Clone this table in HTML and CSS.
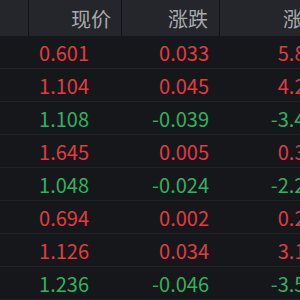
FILE: index.html
```html
<!DOCTYPE html>
<html>
<head>
<meta charset="utf-8">
<link rel="stylesheet" href="styles.css">
</head>
<body>
<div class="table">
  <div class="row head">
    <div class="cell c0"></div>
    <div class="cell c1">现价</div>
    <div class="cell c2">涨跌</div>
    <div class="cell c3">涨跌幅</div>
  </div>
  <div class="row up"><div class="cell c0"></div><div class="cell c1">0.601</div><div class="cell c2">0.033</div><div class="cell c3">5.81%</div></div>
  <div class="row up"><div class="cell c0"></div><div class="cell c1">1.104</div><div class="cell c2">0.045</div><div class="cell c3">4.25%</div></div>
  <div class="row down"><div class="cell c0"></div><div class="cell c1">1.108</div><div class="cell c2">-0.039</div><div class="cell c3">-3.40%</div></div>
  <div class="row up"><div class="cell c0"></div><div class="cell c1">1.645</div><div class="cell c2">0.005</div><div class="cell c3">0.30%</div></div>
  <div class="row down"><div class="cell c0"></div><div class="cell c1">1.048</div><div class="cell c2">-0.024</div><div class="cell c3">-2.24%</div></div>
  <div class="row up"><div class="cell c0"></div><div class="cell c1">0.694</div><div class="cell c2">0.002</div><div class="cell c3">0.29%</div></div>
  <div class="row up"><div class="cell c0"></div><div class="cell c1">1.126</div><div class="cell c2">0.034</div><div class="cell c3">3.11%</div></div>
  <div class="row down"><div class="cell c0"></div><div class="cell c1">1.236</div><div class="cell c2">-0.046</div><div class="cell c3">-3.59%</div></div>
</div>
</body>
</html>
```
FILE: styles.css
```css
html, body {
  margin: 0;
  padding: 0;
  background: #16171b;
  width: 300px;
  height: 300px;
  overflow: hidden;
}
.table {
  width: 360px;
  font-family: "Noto Sans CJK SC", "Noto Sans", sans-serif;
}
.row {
  display: grid;
  grid-template-columns: 29px 93px 98px 134px;
  height: 33px;
  border-bottom: 1px solid #222328;
  box-sizing: border-box;
  font-size: 20px;
}
.row.head {
  height: 36px;
  background: #25262b;
  color: #a9aaae;
  border-bottom: none;
}
.cell {
  display: flex;
  align-items: center;
  justify-content: flex-end;
  padding-right: 10px;
  padding-top: 1px;
  box-sizing: border-box;
  line-height: 1;
}
.head .cell {
  border-right: 1px solid #121316;
}
.up { color: #e33b40; }
.down { color: #2cb45c; }
.c1 { padding-right: 33px; }
.c2 { padding-right: 11px; }
.c3 { padding-right: 19px; }
.head .c1 { padding-right: 10px; }
.head .c2 { padding-right: 11px; }
.head .c3 { padding-right: 10px; }
```
